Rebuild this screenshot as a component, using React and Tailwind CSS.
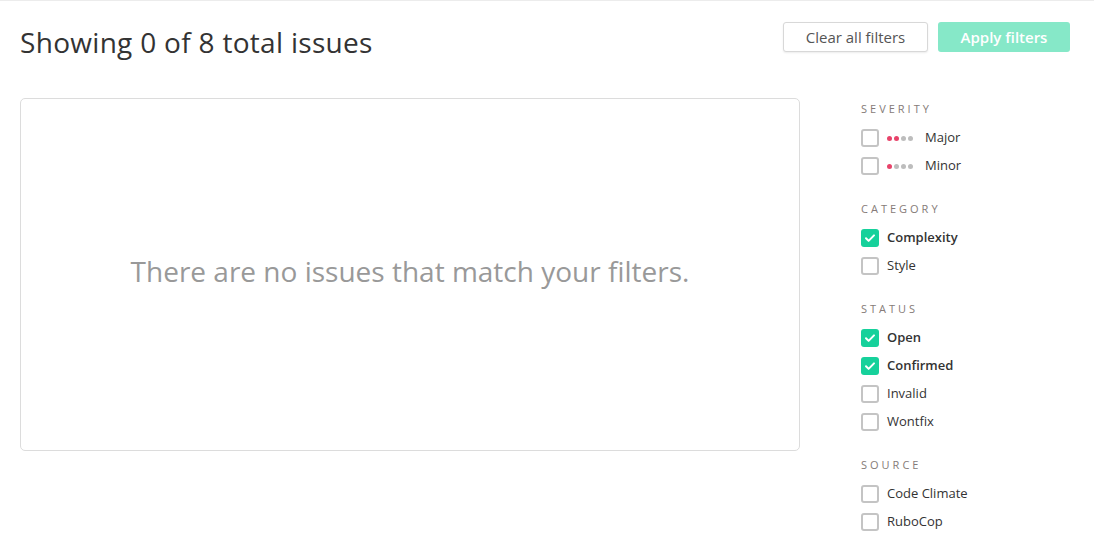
import React from 'react';

const font = { fontFamily: '"Open Sans", "Liberation Sans", sans-serif' };

const sections = [
  {
    title: 'Severity',
    items: [
      { label: 'Major', dots: 2 },
      { label: 'Minor', dots: 1 },
    ],
  },
  {
    title: 'Category',
    items: [{ label: 'Complexity', checked: true }, { label: 'Style' }],
  },
  {
    title: 'Status',
    items: [
      { label: 'Open', checked: true },
      { label: 'Confirmed', checked: true },
      { label: 'Invalid' },
      { label: 'Wontfix' },
    ],
  },
  {
    title: 'Source',
    items: [{ label: 'Code Climate' }, { label: 'RuboCop' }],
  },
];

const Checkbox = ({ checked }) =>
  checked ? (
    <span className="flex h-[18px] w-[18px] shrink-0 items-center justify-center rounded-[3px] bg-[#16d19b]">
      <svg width="12" height="12" viewBox="0 0 12 12" fill="none">
        <path d="M2 6.3l2.6 2.6L10 3.4" stroke="white" strokeWidth="2" strokeLinecap="round" strokeLinejoin="round" />
      </svg>
    </span>
  ) : (
    <span className="h-[18px] w-[18px] shrink-0 rounded-[3px] border-2 border-[#c4c4c4] bg-white" />
  );

const Dots = ({ count }) => (
  <span className="flex items-center gap-[2px]">
    {[0, 1, 2, 3].map((i) => (
      <span
        key={i}
        className={`h-[5px] w-[5px] rounded-full ${i < count ? 'bg-[#e8436a]' : 'bg-[#bdbdbd]'}`}
      />
    ))}
  </span>
);

const FilterRow = ({ item }) => (
  <label className="flex h-[28px] items-center gap-[8px]">
    <Checkbox checked={item.checked} />
    {item.dots !== undefined && <Dots count={item.dots} />}
    <span
      className={`text-[13px] text-[#333] ${item.checked ? 'font-semibold' : ''} ${item.dots !== undefined ? 'ml-[4px]' : ''}`}
    >
      {item.label}
    </span>
  </label>
);

export default function App() {
  return (
    <div className="min-h-[544px] w-[1094px] border-t border-[#ececec] bg-white" style={font}>
      <div className="flex items-start justify-between pl-5 pr-6 pt-[21px]">
        <h1 className="mt-[2px] text-[28px] leading-[36px] tracking-[0.3px] text-[#333]">
          Showing 0 of 8 total issues
        </h1>
        <div className="flex gap-[10px]">
          <button className="h-[30px] w-[145px] rounded-[3px] border border-[#d8d8d8] bg-white text-[15px] text-[#555] shadow-[0_1px_2px_rgba(0,0,0,0.08)]">
            Clear all filters
          </button>
          <button className="h-[30px] w-[132px] rounded-[3px] bg-[#86e8c8] text-[15px] font-semibold text-white">
            Apply filters
          </button>
        </div>
      </div>

      <div className="mt-[38px] flex pl-5">
        <div className="flex h-[353px] w-[780px] items-center justify-center rounded-[5px] border border-[#dcdcdc] pb-[8px]">
          <p className="text-[28px] text-[#999]">There are no issues that match your filters.</p>
        </div>

        <aside className="ml-[60px] mt-[3px] flex flex-col gap-[21px] pl-[1px]">
          {sections.map((s) => (
            <div key={s.title}>
              <h3 className="mb-[7px] text-[11px] uppercase leading-[16px] tracking-[3px] text-[#857b78]">
                {s.title}
              </h3>
              {s.items.map((item) => (
                <FilterRow key={item.label} item={item} />
              ))}
            </div>
          ))}
        </aside>
      </div>
    </div>
  );
}
